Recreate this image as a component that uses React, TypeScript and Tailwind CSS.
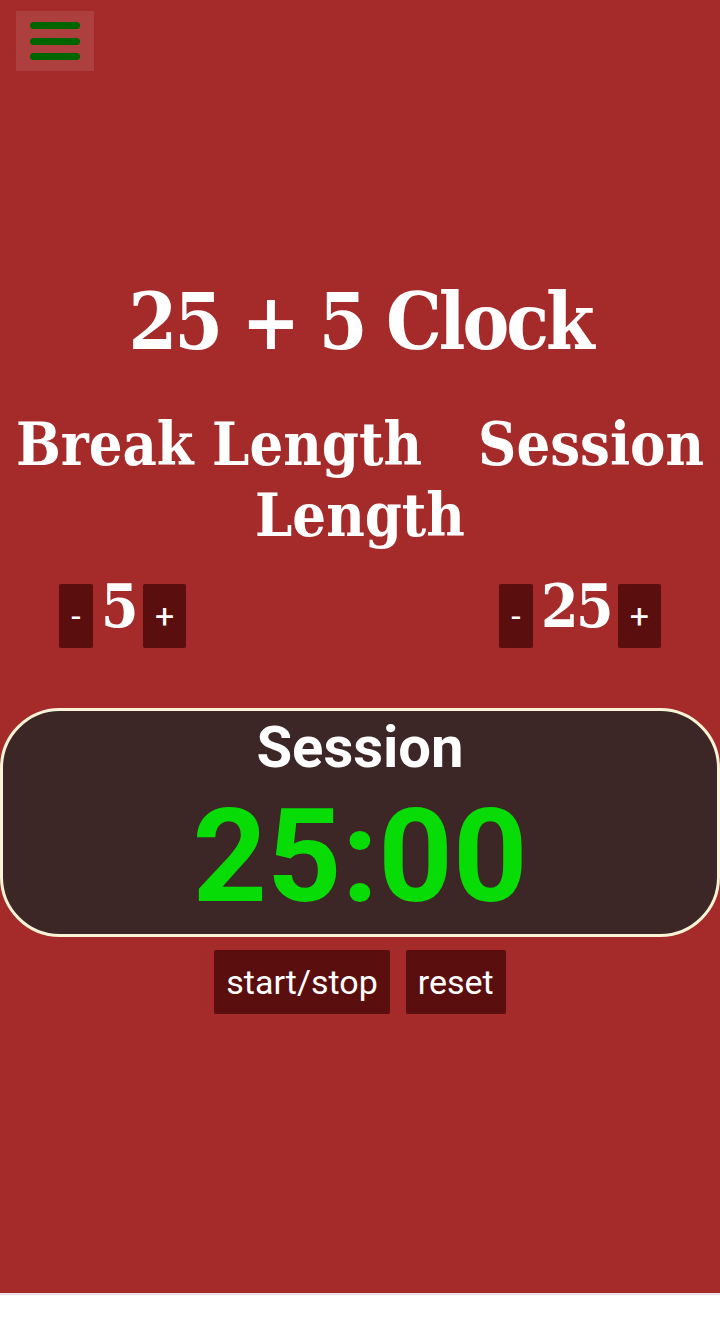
import React from "react";

const serif = { fontFamily: "'DejaVu Serif Condensed', 'DejaVu Serif', serif", fontStretch: "condensed" } as React.CSSProperties;
const sans = { fontFamily: "Roboto, 'Liberation Sans', sans-serif" } as React.CSSProperties;

function Ctrl({ value }: { value: string }) {
  return (
    <div className="flex items-start">
      <button style={sans} className="h-[64px] w-[34px] bg-[#5a0e0e] text-white text-[34px] rounded-[2px] leading-[40px]">-</button>
      <span style={serif} className="ml-[8px] mr-[7px] -mt-2 text-white font-bold text-[60px] leading-[60px] tracking-[-2.5px]">{value}</span>
      <button style={sans} className="h-[64px] w-[43px] bg-[#5a0e0e] text-white text-[34px] rounded-[2px] leading-[40px]">+</button>
    </div>
  );
}

export default function App() {
  return (
    <div className="box-border h-[1295px] bg-[#a52a2a] border-b-2 border-[#e4e4e4] flex flex-col">
      <div className="pt-[11px] pl-4">
        <button className="w-[78px] h-[60px] bg-white/10 flex flex-col items-center justify-center gap-[8.5px]">
          <span className="block w-[50px] h-[7px] rounded-full bg-[#006400]" />
          <span className="block w-[50px] h-[7px] rounded-full bg-[#006400]" />
          <span className="block w-[50px] h-[7px] rounded-full bg-[#006400]" />
        </button>
      </div>
      <h1 style={serif} className="mt-[212px] text-center text-white font-bold text-[78px] leading-[78px] tracking-[-3px]">
        25 + 5 Clock
      </h1>
      <div style={serif} className="mt-[48px] text-center text-white font-bold text-[59px] leading-[71px]">
        <span>Break Length</span>
        <span className="inline-block w-[56px]" />
        <span>Session</span>
        <br />
        <span>Length</span>
      </div>
      <div className="mt-[33px] flex justify-between pl-[59px] pr-[59px]">
        <Ctrl value="5" />
        <Ctrl value="25" />
      </div>
      <div className="mt-[60px] border-[3px] border-[#fbf3d6] bg-[#3c2626] rounded-[60px] pt-[3px] flex flex-col items-center">
        <div style={sans} className="text-white font-bold text-[58px] leading-[66px]">Session</div>
        <div style={sans} className="text-[#07dc07] font-bold text-[130px] leading-[154px]">25:00</div>
      </div>
      <div className="mt-[13px] flex justify-center gap-4">
        <button style={sans} className="h-[64px] px-3 bg-[#5a0e0e] text-white text-[34px] rounded-[2px] leading-[40px]">start/stop</button>
        <button style={sans} className="h-[64px] px-3 bg-[#5a0e0e] text-white text-[34px] rounded-[2px] leading-[40px]">reset</button>
      </div>
    </div>
  );
}
